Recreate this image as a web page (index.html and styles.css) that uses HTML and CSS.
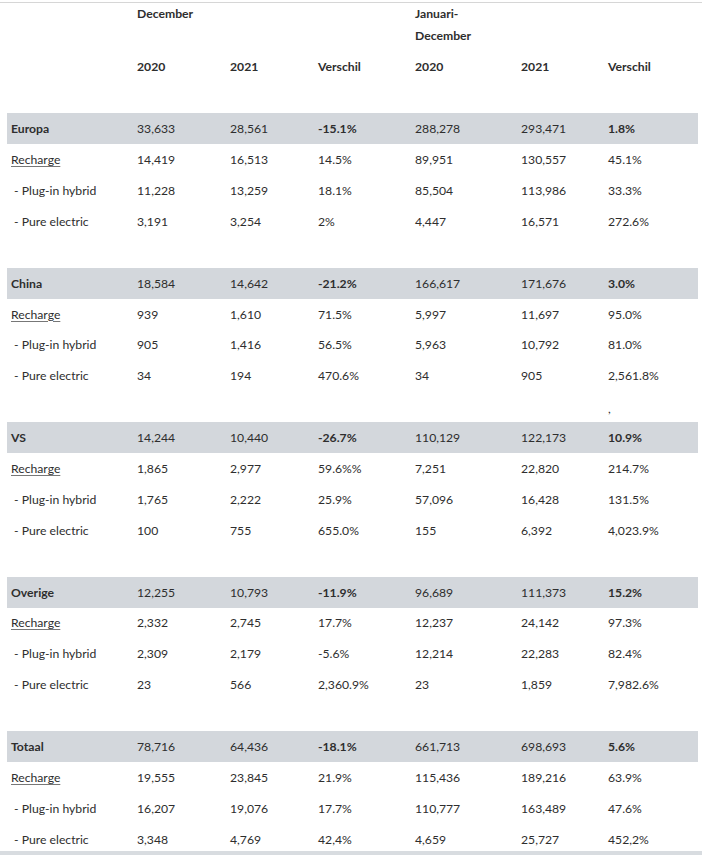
FILE: index.html
```html
<!DOCTYPE html>
<html>
<head>
<meta charset="utf-8">
<link rel="stylesheet" href="styles.css">
</head>
<body>
<div class="sheet">
  <div class="row head1">
    <div class="c"></div>
    <div class="c b">December</div>
    <div class="c"></div>
    <div class="c"></div>
    <div class="c b">Januari-<br>December</div>
    <div class="c"></div>
    <div class="c"></div>
  </div>
  <div class="row">
    <div class="c"></div>
    <div class="c b">2020</div>
    <div class="c b">2021</div>
    <div class="c b">Verschil</div>
    <div class="c b">2020</div>
    <div class="c b">2021</div>
    <div class="c b">Verschil</div>
  </div>
  <div class="row"></div>

  <div class="row band"><div class="c b">Europa</div><div class="c">33,633</div><div class="c">28,561</div><div class="c b">-15.1%</div><div class="c">288,278</div><div class="c">293,471</div><div class="c b">1.8%</div></div>
  <div class="row"><div class="c u"><span>Recharge</span></div><div class="c">14,419</div><div class="c">16,513</div><div class="c">14.5%</div><div class="c">89,951</div><div class="c">130,557</div><div class="c">45.1%</div></div>
  <div class="row"><div class="c">&nbsp;- Plug-in hybrid</div><div class="c">11,228</div><div class="c">13,259</div><div class="c">18.1%</div><div class="c">85,504</div><div class="c">113,986</div><div class="c">33.3%</div></div>
  <div class="row"><div class="c">&nbsp;- Pure electric</div><div class="c">3,191</div><div class="c">3,254</div><div class="c">2%</div><div class="c">4,447</div><div class="c">16,571</div><div class="c">272.6%</div></div>
  <div class="row"></div>

  <div class="row band"><div class="c b">China</div><div class="c">18,584</div><div class="c">14,642</div><div class="c b">-21.2%</div><div class="c">166,617</div><div class="c">171,676</div><div class="c b">3.0%</div></div>
  <div class="row"><div class="c u"><span>Recharge</span></div><div class="c">939</div><div class="c">1,610</div><div class="c">71.5%</div><div class="c">5,997</div><div class="c">11,697</div><div class="c">95.0%</div></div>
  <div class="row"><div class="c">&nbsp;- Plug-in hybrid</div><div class="c">905</div><div class="c">1,416</div><div class="c">56.5%</div><div class="c">5,963</div><div class="c">10,792</div><div class="c">81.0%</div></div>
  <div class="row"><div class="c">&nbsp;- Pure electric</div><div class="c">34</div><div class="c">194</div><div class="c">470.6%</div><div class="c">34</div><div class="c">905</div><div class="c">2,561.8%</div></div>
  <div class="row"><div class="c"></div><div class="c"></div><div class="c"></div><div class="c"></div><div class="c"></div><div class="c"></div><div class="c comma">,</div></div>

  <div class="row band"><div class="c b">VS</div><div class="c">14,244</div><div class="c">10,440</div><div class="c b">-26.7%</div><div class="c">110,129</div><div class="c">122,173</div><div class="c b">10.9%</div></div>
  <div class="row"><div class="c u"><span>Recharge</span></div><div class="c">1,865</div><div class="c">2,977</div><div class="c">59.6%%</div><div class="c">7,251</div><div class="c">22,820</div><div class="c">214.7%</div></div>
  <div class="row"><div class="c">&nbsp;- Plug-in hybrid</div><div class="c">1,765</div><div class="c">2,222</div><div class="c">25.9%</div><div class="c">57,096</div><div class="c">16,428</div><div class="c">131.5%</div></div>
  <div class="row"><div class="c">&nbsp;- Pure electric</div><div class="c">100</div><div class="c">755</div><div class="c">655.0%</div><div class="c">155</div><div class="c">6,392</div><div class="c">4,023.9%</div></div>
  <div class="row"></div>

  <div class="row band"><div class="c b">Overige</div><div class="c">12,255</div><div class="c">10,793</div><div class="c b">-11.9%</div><div class="c">96,689</div><div class="c">111,373</div><div class="c b">15.2%</div></div>
  <div class="row"><div class="c u"><span>Recharge</span></div><div class="c">2,332</div><div class="c">2,745</div><div class="c">17.7%</div><div class="c">12,237</div><div class="c">24,142</div><div class="c">97.3%</div></div>
  <div class="row"><div class="c">&nbsp;- Plug-in hybrid</div><div class="c">2,309</div><div class="c">2,179</div><div class="c">-5.6%</div><div class="c">12,214</div><div class="c">22,283</div><div class="c">82.4%</div></div>
  <div class="row"><div class="c">&nbsp;- Pure electric</div><div class="c">23</div><div class="c">566</div><div class="c">2,360.9%</div><div class="c">23</div><div class="c">1,859</div><div class="c">7,982.6%</div></div>
  <div class="row"></div>

  <div class="row band"><div class="c b">Totaal</div><div class="c">78,716</div><div class="c">64,436</div><div class="c b">-18.1%</div><div class="c">661,713</div><div class="c">698,693</div><div class="c b">5.6%</div></div>
  <div class="row"><div class="c u"><span>Recharge</span></div><div class="c">19,555</div><div class="c">23,845</div><div class="c">21.9%</div><div class="c">115,436</div><div class="c">189,216</div><div class="c">63.9%</div></div>
  <div class="row"><div class="c">&nbsp;- Plug-in hybrid</div><div class="c">16,207</div><div class="c">19,076</div><div class="c">17.7%</div><div class="c">110,777</div><div class="c">163,489</div><div class="c">47.6%</div></div>
  <div class="row last"><div class="c">&nbsp;- Pure electric</div><div class="c">3,348</div><div class="c">4,769</div><div class="c">42,4%</div><div class="c">4,659</div><div class="c">25,727</div><div class="c">452,2%</div></div>
</div>
</body>
</html>
```
FILE: styles.css
```css
html, body {
  margin: 0;
  padding: 0;
  background: #ffffff;
}
body {
  font-family: Lato, "Liberation Sans", sans-serif;
  font-size: 12.2px;
  color: #2e2e2e;
}
.sheet {
  margin-top: 2px;
  border-top: 1px solid #d6d6d6;
  border-bottom: 4px solid #d8dce0;
  padding: 0 4px 0 7px;
  height: 853px;
  box-sizing: border-box;
  overflow: hidden;
}
.row {
  display: grid;
  grid-template-columns: 126px 93px 88px 97px 106px 87px 94px;
  height: 30.9px;
  align-items: center;
}
.row.head1 {
  height: 48.5px;
  align-items: start;
  line-height: 22px;
}
.row.last {
  height: 27.5px;
  align-items: start;
  padding-top: 8px;
  box-sizing: border-box;
}
.band {
  background: #d3d7dc;
}
.c {
  padding-left: 4px;
  white-space: nowrap;
}
.b {
  font-weight: 700;
}
.u span {
  text-decoration: underline;
  text-decoration-color: #777;
  text-underline-offset: 2px;
}
.comma {
  padding-top: 4px;
}
```
